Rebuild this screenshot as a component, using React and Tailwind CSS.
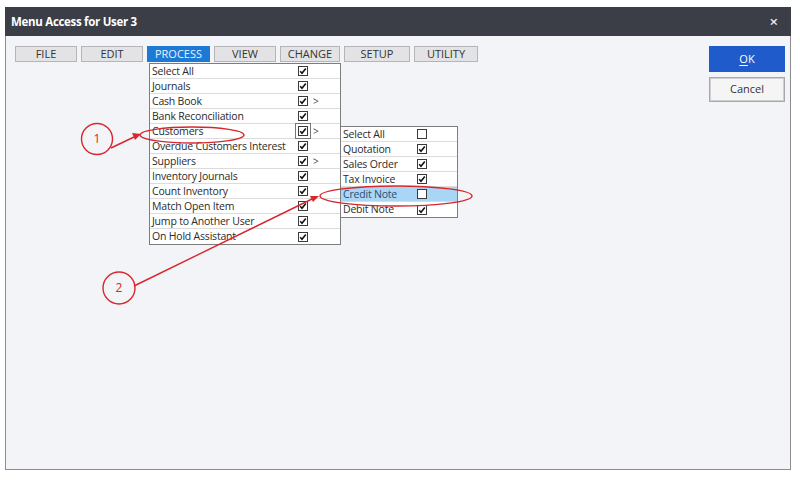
import React from 'react';

const mainItems = [
  { label: 'Select All', checked: true },
  { label: 'Journals', checked: true },
  { label: 'Cash Book', checked: true, sub: true },
  { label: 'Bank Reconciliation', checked: true },
  { label: 'Customers', checked: true, sub: true, focus: true },
  { label: 'Overdue Customers Interest', checked: true },
  { label: 'Suppliers', checked: true, sub: true },
  { label: 'Inventory Journals', checked: true },
  { label: 'Count Inventory', checked: true },
  { label: 'Match Open Item', checked: true },
  { label: 'Jump to Another User', checked: true },
  { label: 'On Hold Assistant', checked: true },
];

const subItems = [
  { label: 'Select All', checked: false },
  { label: 'Quotation', checked: true },
  { label: 'Sales Order', checked: true },
  { label: 'Tax Invoice', checked: true },
  { label: 'Credit Note', checked: false, active: true },
  { label: 'Debit Note', checked: true },
];

const tabs = [
  { label: 'FILE', w: 'w-[62px]' },
  { label: 'EDIT', w: 'w-[62px]' },
  { label: 'PROCESS', w: 'w-[63px]', active: true },
  { label: 'VIEW', w: 'w-[62px]' },
  { label: 'CHANGE', w: 'w-[60px]' },
  { label: 'SETUP', w: 'w-[66px]' },
  { label: 'UTILITY', w: 'w-[64px]' },
];

function Check({ checked }) {
  return (
    <svg width="10" height="10" viewBox="0 0 10 10" className="block">
      <rect x="0.5" y="0.5" width="9" height="9" fill="white" stroke="#3a3a3a" strokeWidth="1" />
      {checked && <path d="M2.2 5.2 L4 7.2 L7.8 2.6" fill="none" stroke="#111" strokeWidth="1.6" />}
    </svg>
  );
}

export default function App() {
  return (
    <div
      className="relative w-[800px] h-[482px] bg-white pt-[7px] pl-[5px] overflow-hidden"
      style={{ fontFamily: '"Open Sans", "Noto Sans", sans-serif' }}
    >
      <div className="w-[786px] h-[463px] border border-[#8c8c8c] bg-[#f3f4f8] flex flex-col">
        {/* title bar */}
        <div className="h-[29px] bg-[#3b3e46] flex items-center justify-between pl-[6px] pr-[13px] -mx-px -mt-px">
          <span className="text-white text-[11.5px] font-bold tracking-[-0.3px]">Menu Access for User 3</span>
          <span className="text-[#f0f0f0] text-[15px] leading-none font-semibold">×</span>
        </div>

        {/* body */}
        <div className="flex-1 relative flex justify-between pt-[10px] pl-[9px] pr-[5px]">
          <div className="flex gap-[4px] h-[16px]">
            {tabs.map((t) => (
              <div
                key={t.label}
                className={
                  t.active
                    ? `${t.w} h-[16px] bg-[#1c7ad6] text-[#e8f2ff] text-[11px] leading-[16px] text-center`
                    : `${t.w} h-[16px] bg-[#e3e3e5] border border-[#b5b5b8] text-[#333] text-[11px] leading-[14px] text-center`
                }
              >
                {t.label}
              </div>
            ))}
          </div>

          <div className="flex flex-col gap-[5px]">
            <div className="w-[76px] h-[26px] bg-[#1f5bcb] text-white text-[11px] flex items-center justify-center">
              <span className="underline underline-offset-2">O</span>K
            </div>
            <div className="w-[76px] h-[25px] bg-[#f5f5f6] border-2 border-[#cfcfd2] outline outline-1 outline-[#a8a8ab] -outline-offset-1 text-[#333] text-[11px] flex items-center justify-center">
              Cancel
            </div>
          </div>

          {/* dropdown menu */}
          <div className="absolute left-[143px] top-[27px] w-[192px] bg-white border border-[#7d7d7d]">
            {mainItems.map((it, i) => (
              <div
                key={it.label}
                className={`h-[15px] flex items-center text-[10.5px] tracking-[-0.2px] text-[#2b2b2b] ${i < mainItems.length - 1 ? 'border-b border-[#dcdcdc]' : ''}`}
              >
                <span className="w-[148px] pl-[2px] leading-none whitespace-nowrap">{it.label}</span>
                <span className={`relative flex items-center ${it.focus ? 'outline outline-1 outline-[#777] outline-offset-[2px]' : ''}`}>
                  <Check checked={it.checked} />
                </span>
                {it.sub && <span className="ml-[5px] text-[10px] text-[#444] leading-none">&gt;</span>}
              </div>
            ))}
          </div>

          {/* sub menu */}
          <div className="absolute left-[334px] top-[90px] w-[118px] bg-white border border-[#7d7d7d]">
            {subItems.map((it, i) => (
              <div
                key={it.label}
                className={`h-[15px] flex items-center text-[10.5px] tracking-[-0.2px] ${it.active ? 'bg-[#a9d6f4] text-[#2a4d72]' : 'text-[#2b2b2b]'} ${i < subItems.length - 1 ? 'border-b border-[#dcdcdc]' : ''}`}
              >
                <span className="w-[76px] pl-[2px] leading-none whitespace-nowrap">{it.label}</span>
                <Check checked={it.checked} />
              </div>
            ))}
          </div>
        </div>
      </div>

      {/* annotations */}
      <svg className="absolute left-0 top-0 pointer-events-none" width="800" height="482" viewBox="0 0 800 482">
        <g fill="none" stroke="#d8262c" strokeWidth="1.4">
          <circle cx="97" cy="139" r="15.5" />
          <ellipse cx="192" cy="135" rx="52" ry="8" />
          <line x1="111" y1="148" x2="134" y2="137" />
          <circle cx="119" cy="288" r="16" />
          <ellipse cx="396" cy="196" rx="76" ry="10" />
          <line x1="134" y1="286" x2="312" y2="199" />
        </g>
        <g fill="#d8262c">
          <polygon points="141,134 132,133 135,140" />
          <polygon points="319,196 310,196 313,202" />
        </g>
        <text x="97" y="143" textAnchor="middle" fontSize="12" fill="#d8262c" fontFamily="Open Sans, sans-serif">1</text>
        <text x="119" y="292" textAnchor="middle" fontSize="12" fill="#d8262c" fontFamily="Open Sans, sans-serif">2</text>
      </svg>
    </div>
  );
}
